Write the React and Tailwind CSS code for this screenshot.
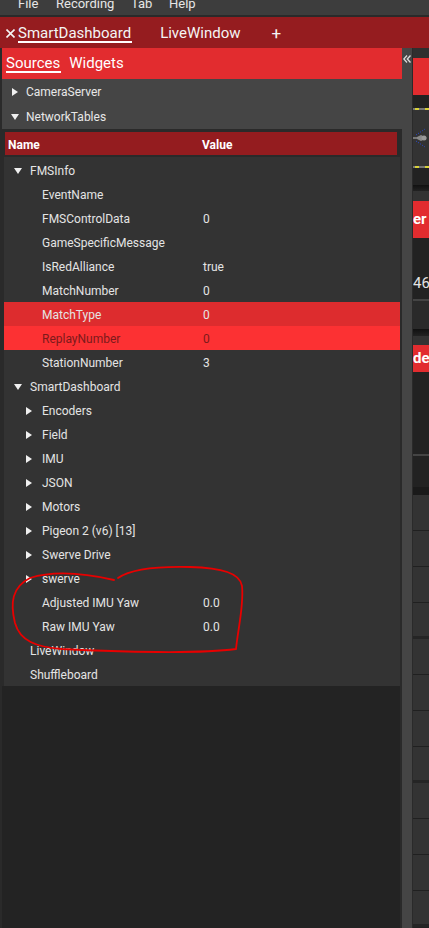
import React from 'react';

const rows = [
  { level: 0, arrow: 'down', name: 'FMSInfo' },
  { level: 1, name: 'EventName' },
  { level: 1, name: 'FMSControlData', value: '0' },
  { level: 1, name: 'GameSpecificMessage' },
  { level: 1, name: 'IsRedAlliance', value: 'true' },
  { level: 1, name: 'MatchNumber', value: '0' },
  { level: 1, name: 'MatchType', value: '0', state: 'selected' },
  { level: 1, name: 'ReplayNumber', value: '0', state: 'hover' },
  { level: 1, name: 'StationNumber', value: '3' },
  { level: 0, arrow: 'down', name: 'SmartDashboard' },
  { level: 1, arrow: 'right', name: 'Encoders' },
  { level: 1, arrow: 'right', name: 'Field' },
  { level: 1, arrow: 'right', name: 'IMU' },
  { level: 1, arrow: 'right', name: 'JSON' },
  { level: 1, arrow: 'right', name: 'Motors' },
  { level: 1, arrow: 'right', name: 'Pigeon 2 (v6) [13]' },
  { level: 1, arrow: 'right', name: 'Swerve Drive' },
  { level: 1, arrow: 'right', name: 'swerve' },
  { level: 1, name: 'Adjusted IMU Yaw', value: '0.0' },
  { level: 1, name: 'Raw IMU Yaw', value: '0.0' },
  { level: 0, name: 'LiveWindow' },
  { level: 0, name: 'Shuffleboard' },
];

function Arrow({ dir }) {
  if (dir === 'down') {
    return (
      <svg width="8" height="6" viewBox="0 0 8 6" className="block">
        <polygon points="0,0 8,0 4,6" fill="#f0f0f0" />
      </svg>
    );
  }
  return (
    <svg width="6" height="8" viewBox="0 0 6 8" className="block">
      <polygon points="0,0 6,4 0,8" fill="#f0f0f0" />
    </svg>
  );
}

function TreeRow({ level, arrow, name, value, state }) {
  const bg = state === 'selected' ? 'bg-[#dd2c2e]' : state === 'hover' ? 'bg-[#fc3133]' : '';
  const text = state === 'hover' ? 'text-[#7c1a1b]' : 'text-[#e4e4e4]';
  return (
    <div className={`h-[24px] flex items-center pt-[2px] ${bg} ${text}`}>
      <div className={`w-[199px] flex items-center ${level === 0 ? 'pl-[10px]' : 'pl-[22px]'}`}>
        <span className="w-[16px] flex items-center">{arrow && <Arrow dir={arrow} />}</span>
        <span className="whitespace-nowrap">{name}</span>
      </div>
      <span>{value}</span>
    </div>
  );
}

function RightStrip() {
  const cells = [0, 1, 2, 3, 4, 5, 6, 7, 8, 9, 10, 11];
  return (
    <div className="w-[16px] flex flex-col bg-[#222] overflow-hidden">
      <div className="h-[10px] bg-[#2f2f2f]" />
      <div className="h-[37px] bg-[#e22c2f]" />
      <div className="h-[13px] bg-[#222]" />
      <div className="h-[2px] bg-[#777] flex gap-[6px] pl-[2px]">
        <span className="w-[4px] bg-[#d8d23a]" />
        <span className="w-[4px] bg-[#d8d23a]" />
      </div>
      <div className="h-[56px] bg-[#333] flex items-center">
        <svg width="16" height="20" viewBox="0 0 16 20">
          <path d="M2 10 L8 7 L14 10 L8 13 Z" fill="#8a8a8a" />
          <circle cx="11" cy="10" r="2.5" fill="#9a9a9a" />
          <rect x="0" y="9" width="4" height="2" fill="#777" />
          <path d="M3 7 L12 1 M3 13 L12 19" stroke="#2a4bd8" strokeWidth="1" strokeDasharray="1 1.5" />
        </svg>
      </div>
      <div className="h-[2px] bg-[#777] flex gap-[6px] pl-[2px]">
        <span className="w-[4px] bg-[#d8d23a]" />
        <span className="w-[4px] bg-[#d8d23a]" />
      </div>
      <div className="h-[17px] bg-[#222]" />
      <div className="h-[6px] bg-gradient-to-b from-[#111] to-[#222]" />
      <div className="h-[10px] bg-[#333]" />
      <div className="h-[37px] bg-[#e22c2f] flex items-center text-white font-bold text-[15px] leading-none overflow-hidden whitespace-nowrap">er</div>
      <div className="h-[61px] bg-[#222] flex items-end pb-[8px] text-[#e4e4e4] text-[15px] leading-none overflow-hidden whitespace-nowrap">460</div>
      <div className="h-[2px] bg-[#444]" />
      <div className="h-[28px] bg-[#2a2a2a]" />
      <div className="h-[7px] bg-gradient-to-b from-[#111] to-[#222]" />
      <div className="h-[9px] bg-[#333]" />
      <div className="h-[27px] bg-[#e22c2f] flex items-center text-white font-bold text-[15px] leading-none overflow-hidden whitespace-nowrap">de</div>
      <div className="h-[82px] bg-[#222]" />
      <div className="h-[2px] bg-[#444]" />
      <div className="h-[31px] bg-[#222]" />
      <div className="h-[8px] bg-[#1a1a1a]" />
      {cells.map((i) => (
        <div key={i} className={`h-[36px] shrink-0 bg-[#333] border-b ${i % 4 === 3 ? 'border-b-[3px] border-[#252525]' : 'border-[#202020]'}`} />
      ))}
    </div>
  );
}

export default function App() {
  return (
    <div className="w-[429px] h-[928px] overflow-hidden bg-[#2a2a2a] flex flex-col font-['Roboto',sans-serif] relative">
      {/* menu bar, cut off at the top */}
      <div className="h-[15px] bg-[#3d3d3d] flex items-start overflow-hidden text-[13px] leading-[13px] text-[#e6e6e6] shrink-0">
        <div className="flex -mt-[3px] pl-[18px]">
          <span className="w-[38px]">File</span>
          <span className="w-[75px]">Recording</span>
          <span className="w-[38px]">Tab</span>
          <span>Help</span>
        </div>
      </div>
      <div className="h-[2px] bg-[#2a2a2a] shrink-0" />

      {/* tabs */}
      <div className="h-[31px] bg-[#951c1f] flex items-center pt-[1px] text-[15px] text-[#f4f4f4] shrink-0">
        <svg width="9" height="9" viewBox="0 0 9 9" className="ml-[6px] mr-[3px]">
          <path d="M0.5 0.5 L8.5 8.5 M8.5 0.5 L0.5 8.5" stroke="#f4f4f4" strokeWidth="1.6" />
        </svg>
        <span className="relative leading-none">
          SmartDashboard
          <span className="absolute left-0 right-[-1px] top-[15px] h-[2px] bg-white" />
        </span>
        <span className="ml-[29px] leading-none">LiveWindow</span>
        <span className="ml-[31px] leading-none text-[17px]">+</span>
      </div>

      <div className="flex-1 flex min-h-0">
        {/* left panel */}
        <div className="w-[402px] flex flex-col pl-[2px] bg-[#2a2a2a]">
          <div className="h-[31px] bg-[#e22c2f] flex items-center text-[15px] text-white shrink-0">
            <span className="relative ml-[4px] leading-none">
              Sources
              <span className="absolute left-0 right-[-1px] top-[15px] h-[2px] bg-white" />
            </span>
            <span className="ml-[9px] leading-none">Widgets</span>
          </div>
          <div className="h-[50px] bg-[#454545] text-[12px] text-[#e8e8e8] shrink-0">
            <div className="h-[25px] flex items-center pl-[10px] pt-[1px]">
              <span className="w-[14px] flex items-center"><Arrow dir="right" /></span>
              <span>CameraServer</span>
            </div>
            <div className="h-[25px] flex items-center pl-[9px] pt-[1px]">
              <span className="w-[15px] flex items-center"><Arrow dir="down" /></span>
              <span>NetworkTables</span>
            </div>
          </div>

          {/* network tables tree */}
          <div className="flex-1 flex flex-col pt-[3px] pr-[2px] bg-[#2a2a2a] relative">
            <div className="h-[23px] mx-[3px] bg-[#941c1f] flex items-center pt-[2px] text-[12px] font-bold text-white shrink-0">
              <span className="w-[197px] pl-[3px]">Name</span>
              <span>Value</span>
            </div>
            <div className="h-[2px] shrink-0" />
            <div className="ml-[2px] bg-[#333333] pt-[1px] text-[12px] shrink-0">
              {rows.map((r) => (
                <TreeRow key={r.name} {...r} />
              ))}
            </div>
            <div className="flex-1 bg-[#232323]" />

            {/* hand-drawn annotation */}
            <svg className="absolute left-[-2px] top-[-129px] pointer-events-none" width="402" height="928" viewBox="0 0 402 928">
              <path
                d="M118 578 C 128 571, 150 566, 190 567 C 222 568, 240 573, 242 586 C 244 606, 238 628, 236 649 C 200 654, 120 652, 62 649 C 36 647, 20 641, 15 623 C 10 603, 12 587, 30 578 C 55 570, 88 574, 114 580"
                fill="none"
                stroke="#e80000"
                strokeWidth="1.8"
                strokeLinecap="round"
              />
            </svg>
          </div>
        </div>

        {/* splitter */}
        <div className="w-[10px] bg-[#454545] flex justify-center pt-[7px]">
          <svg width="8" height="8" viewBox="0 0 8 8" className="block">
            <path d="M4 0.5 L0.8 4 L4 7.5 M7.5 0.5 L4.3 4 L7.5 7.5" fill="none" stroke="#dcdcdc" strokeWidth="1.3" />
          </svg>
        </div>
        <div className="w-[1px] bg-[#2a2a2a]" />
        <RightStrip />
      </div>
    </div>
  );
}
